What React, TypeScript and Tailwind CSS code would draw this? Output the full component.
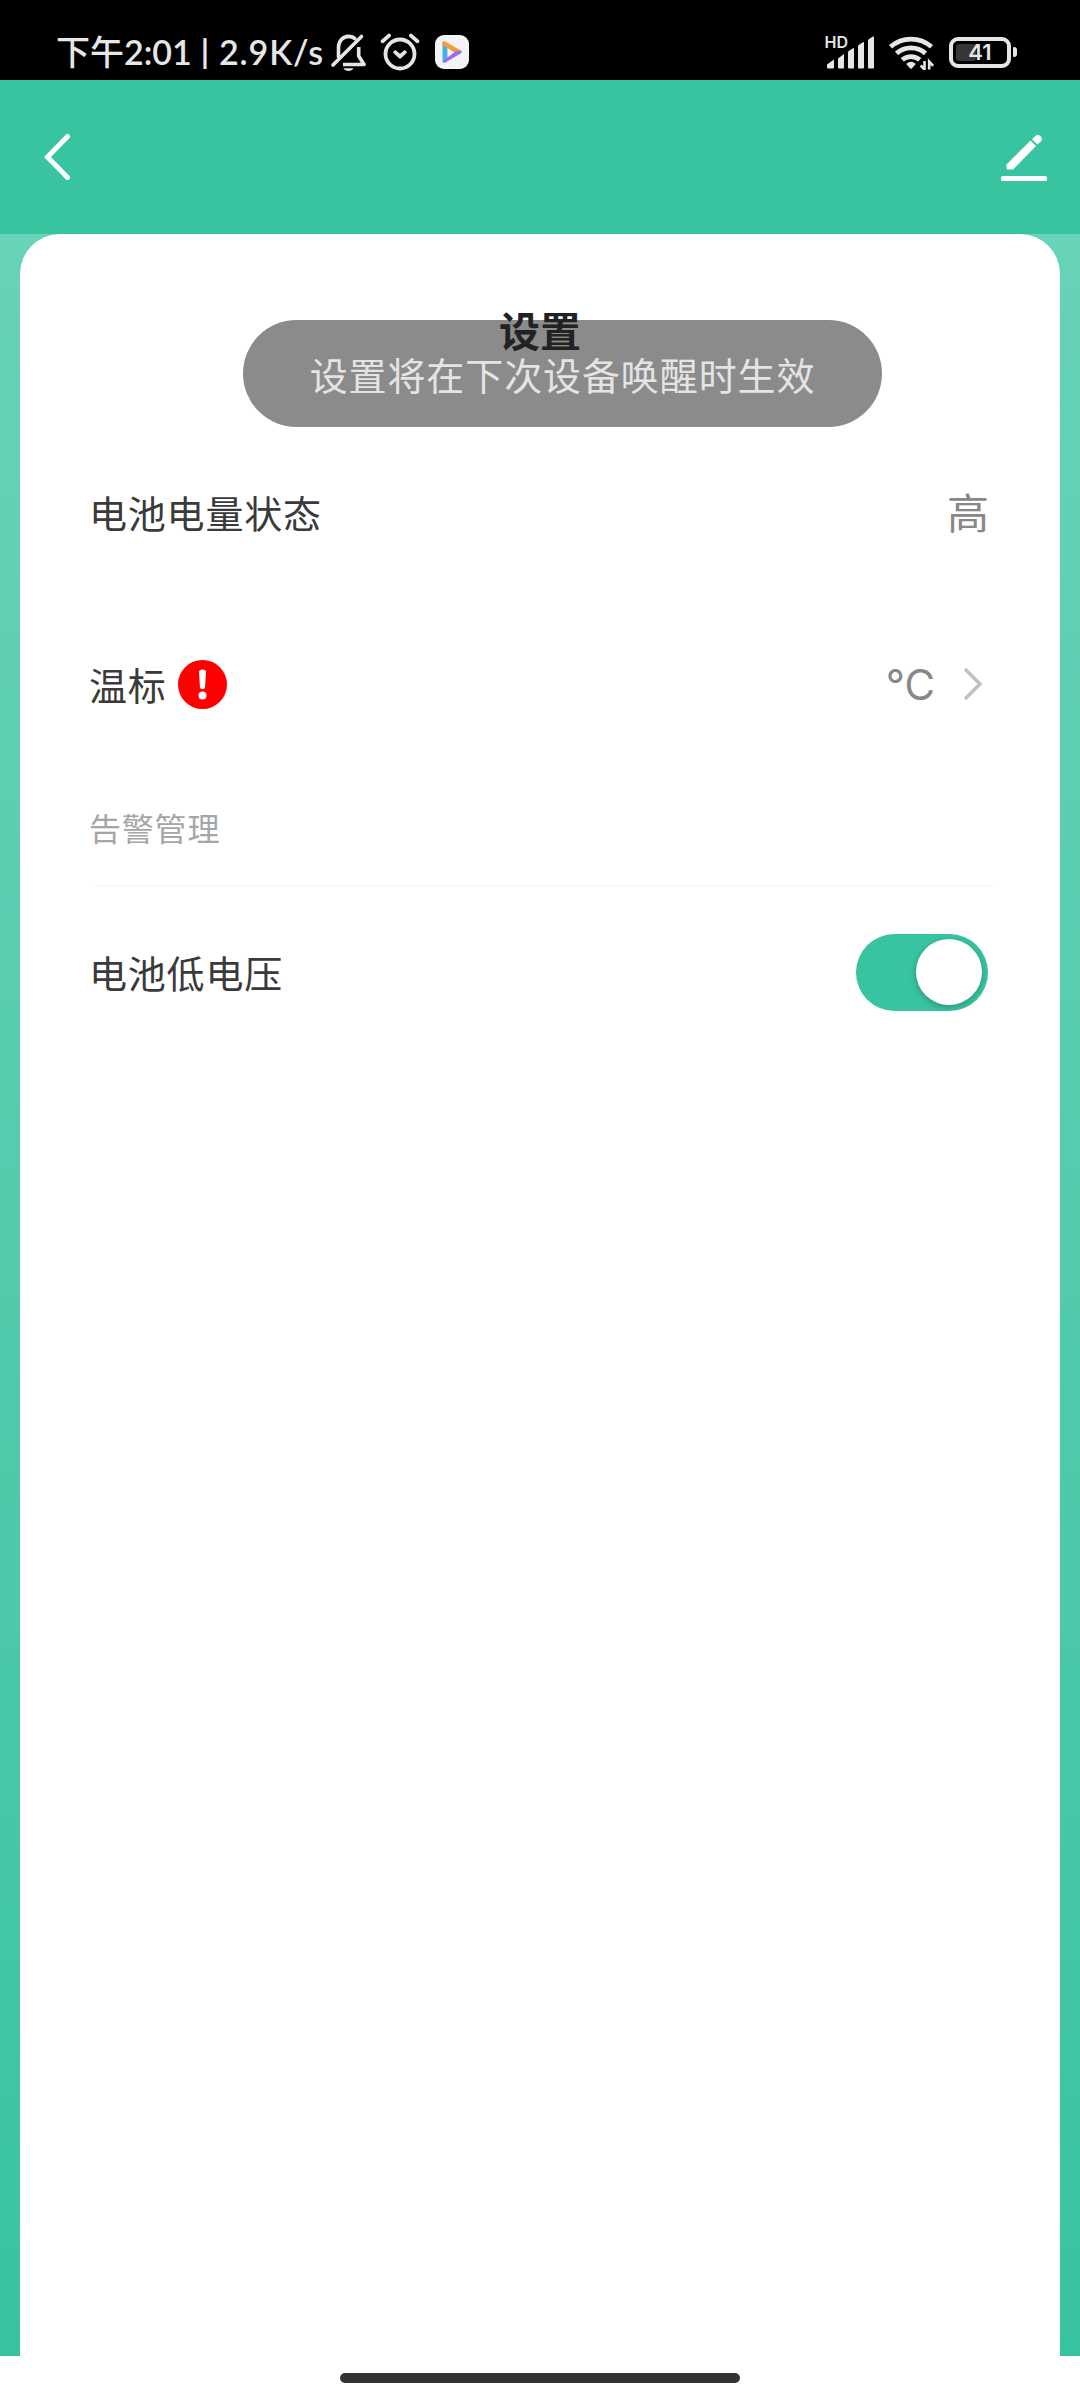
import { useState } from "react";
import type { ReactNode } from "react";

function MutedBellIcon() {
  return (
    <svg className="h-[39px] w-[36px]" viewBox="0 0 36 39" fill="none" stroke="#e6e6e6" strokeWidth="3.6" strokeLinecap="round" strokeLinejoin="round">
      <path d="M3 32 31.5 3.500" />
      <path d="M8.500 24V14.500C8.500 8 13 3.400 18.500 3.400C21 3.400 23 4.100 24.800 5.500" />
      <path d="M28.700 14V23L34 31.500H13" strokeLinecap="butt" />
      <path d="M13.500 35.300h10c-1 2-3 2.700-5 2.700s-4-.7-5-2.700Z" fill="#e6e6e6" stroke="none" />
    </svg>
  );
}

function AlarmIcon() {
  return (
    <svg className="h-[38px] w-[40px]" viewBox="0 0 40 38" fill="none" stroke="#e6e6e6" strokeWidth="3.800" strokeLinecap="round" strokeLinejoin="round">
      <circle cx="20" cy="21" r="14.500" />
      <path d="m15.200 19.200 4.800 4.300 4.800-4.300" />
      <path d="M2.600 8.200 9 2.600M31 2.600l6.400 5.600" />
    </svg>
  );
}

function VideoAppIcon() {
  return (
    <span className="flex h-[34px] w-[34px] items-center justify-center rounded-[9px] bg-[#f4f3f7]">
      <svg className="h-[24px] w-[22px]" viewBox="0 0 22 24">
        <path d="M1.500 2v20q.5 1 2 .5l3-2V5Z" fill="#3fb4ea" />
        <path d="M1.500 2.500Q2 .3 4.200 1.500L20 10.500 15.500 14 1.500 5Z" fill="#f59a3d" />
        <path d="M20 10.500q1.800 1.300 0 2.700L4 22.700Q2 23 2 21L15 11Z" fill="#9b6cf0" />
        <path d="M6.800 8.500v7.500l6-3.700Z" fill="#f4f3f7" />
      </svg>
    </span>
  );
}

function SignalIcon() {
  return (
    <svg className="h-[36px] w-[52px] overflow-visible" viewBox="0 0 52 36" fill="#e6e6e6">
      <text x="-0.500" y="13.500" fontFamily="Inter, sans-serif" fontSize="16" fontWeight="600">HD</text>
      <path d="M2 30.500 9 25.500v8q0 1-1 1H3q-1 0-1-1Z" />
      <path d="M13 24.500 19 20v13.500q0 1-1 1h-4q-1 0-1-1Z" />
      <path d="M23 18.500q0-1 1-1.700l4-2.600q1-.4 1 .8v18.500q0 1-1 1h-4q-1 0-1-1Z" />
      <path d="M33 12.500q0-1 1-1.700l4-2.600q1-.4 1 .8v24.500q0 1-1 1h-4q-1 0-1-1Z" />
      <path d="M43 6.800q0-1 1-1.700l4-2.600q1-.4 1 .8v30.200q0 1-1 1h-4q-1 0-1-1Z" />
    </svg>
  );
}

function WifiIcon() {
  return (
    <svg className="h-[36px] w-[48px]" viewBox="0 0 48 36" fill="none" stroke="#e6e6e6" strokeWidth="4.800">
      <path d="M2.500 12.800A31 31 0 0 1 43.500 12.800" />
      <path d="M8.500 19.400A22 22 0 0 1 37.500 19.400" />
      <path d="M14.200 25.800A13.500 13.500 0 0 1 31.800 25.800" />
      <path d="M18.200 30Q23 25.500 27.800 30L24 34.300Q23 35.300 22 34.300Z" fill="#e6e6e6" stroke="none" />
      <path d="M36.500 27v8.500l-3.800-4M41.200 35.500V27.500l4 4.300" strokeWidth="2.600" />
    </svg>
  );
}

function Battery({ level }: { level: number }) {
  return (
    <div className="flex items-center gap-[2px]">
      <div className="relative flex h-[31px] w-[62px] items-center justify-center rounded-[9px] border-4 border-[#e6e6e6]">
        <div className="absolute top-[3px] left-[3px] h-[17px] rounded-[3px] bg-[#373737]" style={{ width: `${level * 0.49}px` }} />
        <span className="relative font-['Inter','Noto_Sans_CJK_SC',sans-serif] text-[22px] leading-none font-semibold">{level}</span>
      </div>
      <div className="h-[10px] w-[4px] rounded-r-[3px] rounded-l-[1px] bg-[#e6e6e6]" />
    </div>
  );
}

function StatusBar() {
  return (
    <div className="flex h-20 items-center bg-black pt-[24px] text-[#e6e6e6]">
      <div className="flex flex-1 items-center pl-[56px]">
        <div className="flex w-[274px] items-center whitespace-nowrap font-['Lato','Noto_Sans_CJK_SC',sans-serif] text-[34px] leading-none font-semibold">
          <span className="font-medium">下午</span>
          <span className="w-[74px]">2:01</span>
          <span className="w-[14px] text-center text-[32px] font-bold">|</span>
          <span className="ml-[7px] tracking-[0.9px]">2.9K/s</span>
        </div>
        <div className="flex items-center">
          <MutedBellIcon />
          <span className="ml-[14px]"><AlarmIcon /></span>
          <span className="ml-[15px]"><VideoAppIcon /></span>
        </div>
      </div>
      <div className="flex items-center pr-[63px]">
        <SignalIcon />
        <span className="ml-[11px]"><WifiIcon /></span>
        <span className="ml-[13px]"><Battery level={41} /></span>
      </div>
    </div>
  );
}

function Header() {
  return (
    <header className="flex h-[154px] items-center justify-between bg-[#38c3a1] pr-[33px] pl-[44px]">
      <button aria-label="返回">
        <svg className="h-[46px] w-[27px]" viewBox="0 0 27 46" fill="none" stroke="white" strokeWidth="5" strokeLinecap="round" strokeLinejoin="miter">
          <path d="M23.500 2.500 3.500 23l20 20.500" />
        </svg>
      </button>
      <button aria-label="编辑">
        <svg className="h-[47px] w-[46px]" viewBox="0 0 46 47" fill="white">
          <path d="M5.500 30.500 29.500 6.500l5.500 5.500L12 35.500H7q-1.500 0-1.500-1.500Z" />
          <path d="M31 5.200 34.300 1.900a4 4 0 0 1 5.600 5.600L36.400 10.600Z" />
          <rect y="42" width="46" height="5" rx="1.500" />
        </svg>
      </button>
    </header>
  );
}

function SettingRow({ label, children }: { label: ReactNode; children: ReactNode }) {
  return (
    <div className="flex h-[172px] items-center justify-between">
      <div className="flex items-center text-[38px] leading-none tracking-[0.8px] text-[#3a3a3a]">{label}</div>
      <div className="flex items-center text-[42px] leading-none text-[#888888]">{children}</div>
    </div>
  );
}

function AlertBadge() {
  return (
    <svg className="ml-[11px] h-[49px] w-[49px]" viewBox="0 0 49 49">
      <circle cx="24.500" cy="24.500" r="24.500" fill="#ff0000" />
      <path d="M21 12q0-2.500 3.500-2.500T28 12l-1 15.500q-.3 1.800-2.500 1.800T22 27.500Z" fill="white" />
      <circle cx="24.500" cy="35.500" r="4" fill="white" />
    </svg>
  );
}

export default function App() {
  const [lowVoltageAlarm, setLowVoltageAlarm] = useState(true);

  return (
    <div className="relative flex h-[2400px] w-[1080px] flex-col overflow-hidden bg-white font-['Noto_Sans_CJK_SC',sans-serif]">
      <StatusBar />
      <Header />

      <main className="h-[2122px] bg-linear-to-b from-[#67d3b9] to-[#38c3a1] px-5">
        <div className="h-full rounded-t-[40px] bg-white pr-[72px] pl-[69px]">
          {/* z-10 keeps the title above the toast */}
          <h1 className="relative z-10 flex h-[192px] items-center justify-center pb-[2px] pl-[3px] text-[41px] leading-none font-bold text-[#222222]">设置</h1>

          <SettingRow label="电池电量状态">
            <span className="mr-[-1px] pb-[3px]">高</span>
          </SettingRow>
          <SettingRow label={<>温标<AlertBadge /></>}>
            <span className="pt-[2px] font-['Inter','Noto_Sans_CJK_SC',sans-serif] tracking-[-1px]">℃</span>
            <svg className="mr-[5px] ml-[29px] h-[34px] w-[20px]" viewBox="0 0 20 34" fill="none" stroke="#c0c0c0" strokeWidth="3.500">
              <path d="m2 2 15 15L2 32" />
            </svg>
          </SettingRow>

          <h2 className="flex h-[115px] items-center pb-[2px] text-[32px] leading-none tracking-[0.8px] text-[#a6a6a6]">告警管理</h2>
          <div className="mr-[-5px] ml-[6px] h-px bg-[#f3f3f3]" />

          <SettingRow label="电池低电压">
            <button
              role="switch"
              aria-checked={lowVoltageAlarm}
              aria-label="电池低电压"
              onClick={() => setLowVoltageAlarm(!lowVoltageAlarm)}
              className={`flex h-[77px] w-[132px] items-center rounded-full px-[6px] ${
                lowVoltageAlarm ? "justify-end bg-[#38c3a1]" : "justify-start bg-[#dddddd]"
              }`}
            >
              <span className="h-[66px] w-[66px] rounded-full bg-white shadow-[0_2px_6px_rgba(0,0,0,0.25)]" />
            </button>
          </SettingRow>
        </div>
      </main>

      <div className="flex flex-1 justify-center pt-[17px]">
        <div className="h-[10px] w-[400px] rounded-full bg-[#333333]" />
      </div>

      {/* toast */}
      <div className="absolute top-[320px] left-[243px] flex h-[107px] w-[639px] items-center justify-center rounded-full bg-[#8b8b8b] text-[38px] leading-none tracking-[0.9px] text-[#e4e4e4]">
        设置将在下次设备唤醒时生效
      </div>
    </div>
  );
}
